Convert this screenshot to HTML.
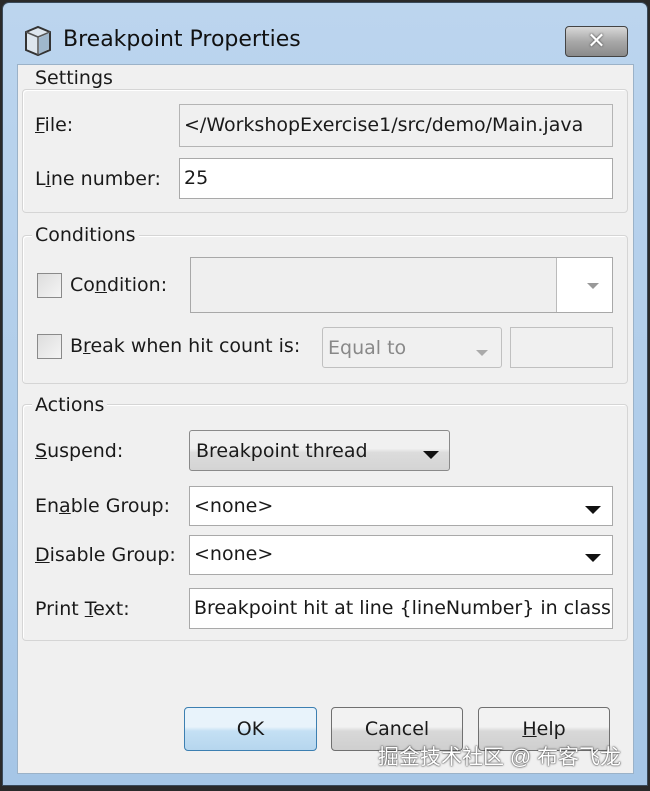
<!DOCTYPE html>
<html><head><meta charset="utf-8"><style>
*{margin:0;padding:0;box-sizing:border-box}
body{width:650px;height:791px;background:#2a2a2a;position:relative;overflow:hidden;font-family:"DejaVu Sans","Liberation Sans",sans-serif;font-size:19px;color:#1a1a1a}
.a{position:absolute}
.frame{left:2px;top:2px;width:646px;height:784px;background:linear-gradient(#bcd5ee,#a6c6e6);border:1px solid #3a4a5a;border-radius:7px 7px 0 0}
.client{left:17px;top:64px;width:617px;height:710px;background:#f0f0f0;border:1px solid #9bb2c8}
.grp{border:1px solid #d5d5d5;border-radius:4px;box-shadow:inset 1px 1px 0 #fff}
.gl{background:#f0f0f0;padding:0 3px;line-height:22px}
.lbl{line-height:24px}
.fld{border:1px solid #a9a9a9;background:#fff;line-height:38px;padding-left:4px;white-space:nowrap;overflow:hidden}
.cb{width:25px;height:25px;border:1px solid #8a8a8a;background:linear-gradient(135deg,#ddd,#f4f4f4)}
.tri{width:0;height:0;border-left:8px solid transparent;border-right:8px solid transparent;border-top:8px solid #111}
.btn{border:1px solid #707070;border-radius:4px;background:linear-gradient(#f2f2f2 45%,#d8d8d8 55%,#cfcfcf);text-align:center;line-height:42px}
</style></head><body>
<div class="a frame"></div>
<svg class="a" style="left:22px;top:24px" width="32" height="34" viewBox="0 0 32 34"><path d="M4 8 L16 3 L28 8 L28 26 L16 31 L4 26 Z" fill="#dde6ee" stroke="#333" stroke-width="2"/><path d="M4 8 L16 13 L28 8 M16 13 L16 31" fill="none" stroke="#555" stroke-width="1.5"/><path d="M17 14 L27 9 L27 25 L17 30Z" fill="#9fb7cc"/></svg>
<div class="a" style="left:63px;top:26px;font-size:22px;line-height:28px;color:#111">Breakpoint Properties</div>
<div class="a" style="left:565px;top:26px;width:63px;height:31px;border:1px solid #444;border-radius:4px;background:linear-gradient(#d8d8d8,#a8a8a8 50%,#8a8a8a);color:#fff;font-weight:bold;font-size:22px;text-align:center;line-height:29px;text-shadow:0 0 2px #333">✕</div>
<div class="a client"></div>

<div class="a grp" style="left:22px;top:89px;width:606px;height:124px"></div>
<div class="a gl" style="left:32px;top:67px">Settings</div>
<div class="a lbl" style="left:35px;top:113px"><u>F</u>ile:</div>
<div class="a fld" style="left:179px;top:104px;width:434px;height:43px;background:#f0f0f0;border-color:#b4b4b4;line-height:41px">&lt;/WorkshopExercise1/src/demo/Main.java</div>
<div class="a lbl" style="left:35px;top:167px">L<u>i</u>ne number:</div>
<div class="a fld" style="left:179px;top:158px;width:434px;height:41px">25</div>

<div class="a grp" style="left:22px;top:235px;width:606px;height:149px"></div>
<div class="a gl" style="left:32px;top:224px">Conditions</div>
<div class="a cb" style="left:37px;top:273px"></div>
<div class="a lbl" style="left:70px;top:273px">Co<u>n</u>dition:</div>
<div class="a" style="left:190px;top:257px;width:423px;height:56px;border:1px solid #a8a8a8;background:#fff"></div>
<div class="a" style="left:191px;top:258px;width:366px;height:54px;background:#efefef;border-right:1px solid #bbb"></div>
<div class="a tri" style="left:587px;top:283px;border-top-color:#999;border-left-width:6px;border-right-width:6px;border-top-width:6px"></div>
<div class="a cb" style="left:37px;top:334px"></div>
<div class="a lbl" style="left:70px;top:334px">B<u>r</u>eak when hit count is:</div>
<div class="a" style="left:322px;top:327px;width:180px;height:41px;border:1px solid #c0c0c0;border-radius:3px;color:#888;line-height:40px;padding-left:5px">Equal to</div>
<div class="a tri" style="left:476px;top:350px;border-top-color:#aaa;border-left-width:6px;border-right-width:6px;border-top-width:6px"></div>
<div class="a" style="left:510px;top:327px;width:103px;height:41px;border:1px solid #c0c0c0"></div>

<div class="a grp" style="left:22px;top:404px;width:606px;height:237px"></div>
<div class="a gl" style="left:32px;top:394px">Actions</div>
<div class="a lbl" style="left:35px;top:439px"><u>S</u>uspend:</div>
<div class="a" style="left:189px;top:430px;width:261px;height:41px;border:1px solid #8a8a8a;border-radius:3px;background:linear-gradient(#f0f0f0 45%,#dcdcdc 55%,#d4d4d4);line-height:40px;padding-left:6px">Breakpoint thread</div>
<div class="a tri" style="left:423px;top:451px"></div>
<div class="a lbl" style="left:35px;top:494px">En<u>a</u>ble Group:</div>
<div class="a fld" style="left:189px;top:486px;width:424px;height:40px">&lt;none&gt;</div>
<div class="a tri" style="left:585px;top:506px"></div>
<div class="a lbl" style="left:35px;top:543px"><u>D</u>isable Group:</div>
<div class="a fld" style="left:189px;top:535px;width:424px;height:40px;line-height:36px">&lt;none&gt;</div>
<div class="a tri" style="left:585px;top:554px"></div>
<div class="a lbl" style="left:35px;top:597px">Print <u>T</u>ext:</div>
<div class="a fld" style="left:189px;top:588px;width:424px;height:41px">Breakpoint hit at line {lineNumber} in class</div>

<div class="a btn" style="left:184px;top:707px;width:133px;height:44px;border-color:#3c7fb1;background:linear-gradient(#e8f3fb 45%,#c4e0f4 55%,#b6d6ee)">OK</div>
<div class="a btn" style="left:331px;top:707px;width:132px;height:44px">Cancel</div>
<div class="a btn" style="left:478px;top:707px;width:132px;height:44px"><u>H</u>elp</div>
<div class="a" style="left:378px;top:744px;font-family:'Liberation Sans','Noto Sans CJK SC',sans-serif;font-size:21px;line-height:28px;color:#fff;text-shadow:0 0 2px #333,0 0 1px #333">掘金技术社区 @ 布客飞龙</div>
</body></html>
